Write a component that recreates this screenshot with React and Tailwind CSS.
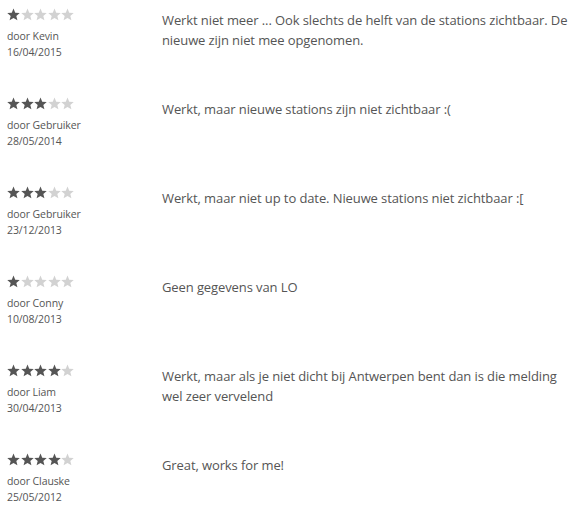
import React from 'react';

const reviews = [
  { rating: 1, author: 'Kevin', date: '16/04/2015', text: 'Werkt niet meer ... Ook slechts de helft van de stations zichtbaar. De nieuwe zijn niet mee opgenomen.' },
  { rating: 3, author: 'Gebruiker', date: '28/05/2014', text: 'Werkt, maar nieuwe stations zijn niet zichtbaar :(' },
  { rating: 3, author: 'Gebruiker', date: '23/12/2013', text: 'Werkt, maar niet up to date. Nieuwe stations niet zichtbaar :[' },
  { rating: 1, author: 'Conny', date: '10/08/2013', text: 'Geen gegevens van LO' },
  { rating: 4, author: 'Liam', date: '30/04/2013', text: 'Werkt, maar als je niet dicht bij Antwerpen bent dan is die melding wel zeer vervelend' },
  { rating: 4, author: 'Clauske', date: '25/05/2012', text: 'Great, works for me!' },
];

const Star = ({ filled }) => (
  <svg width="13" height="13" viewBox="0 0 24 24" className={filled ? 'fill-[#555]' : 'fill-[#d2d2d2]'}>
    <path d="M12 1l3.2 7.6 8.3.6-6.3 5.4 2 8.1L12 18.4l-7.2 4.3 2-8.1L.5 9.2l8.3-.6z" />
  </svg>
);

const Stars = ({ rating }) => (
  <div className="flex gap-[0.5px]">
    {[1, 2, 3, 4, 5].map((i) => (
      <Star key={i} filled={i <= rating} />
    ))}
  </div>
);

export default function App() {
  return (
    <div className="bg-white w-[584px] h-[522px] overflow-hidden text-[#555] font-['Open_Sans',sans-serif]">
      {reviews.map((r, idx) => (
        <div key={idx} className="flex h-[89px] pt-[8px]">
          <div className="w-[162px] pl-[7px] shrink-0">
            <Stars rating={r.rating} />
            <div className="mt-[7px] text-[10.5px] tracking-[-0.1px] leading-[16px]">door {r.author}</div>
            <div className="text-[10.5px] tracking-[-0.1px] leading-[16px]">{r.date}</div>
          </div>
          <div className="flex-1 pr-[10px] pt-[2px] text-[13px] tracking-[-0.1px] leading-[20px]">{r.text}</div>
        </div>
      ))}
    </div>
  );
}
